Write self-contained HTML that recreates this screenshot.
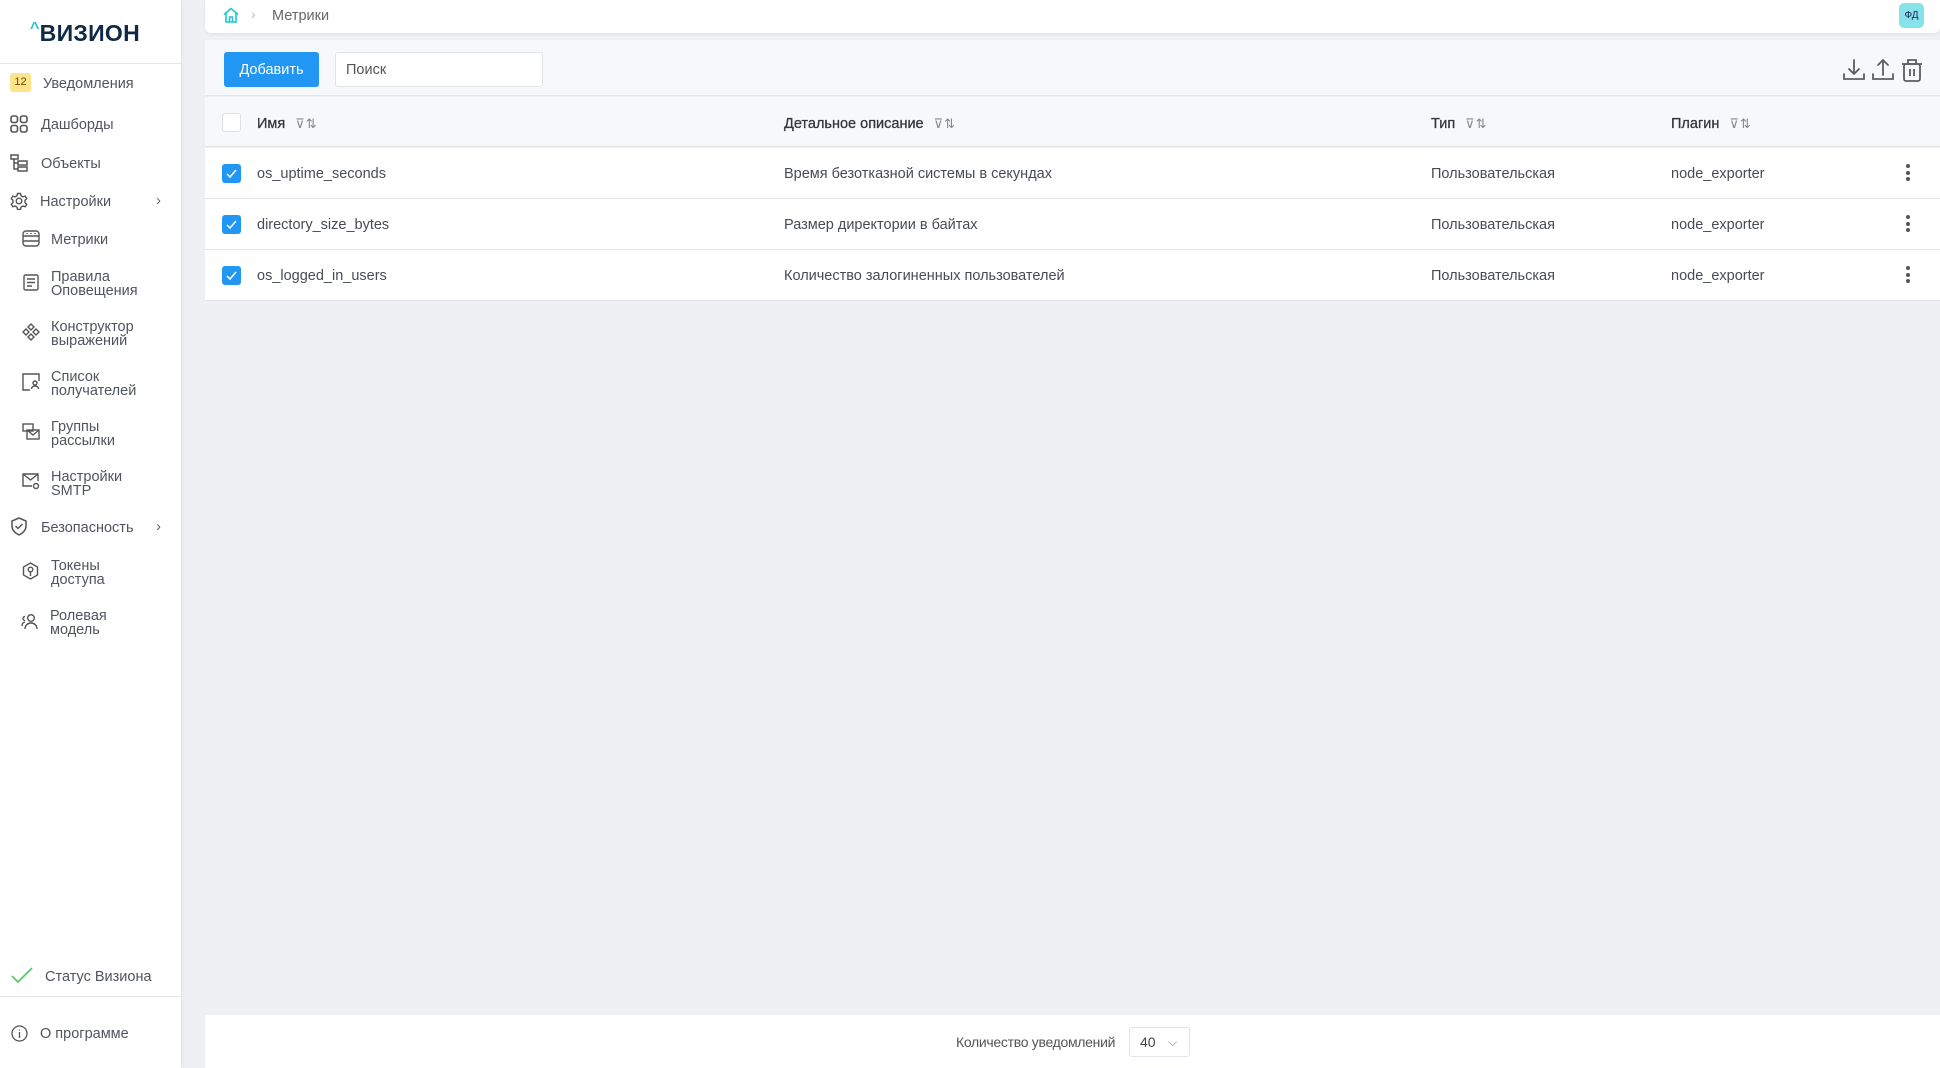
<!DOCTYPE html>
<html><head><meta charset="utf-8"><style>
*{box-sizing:border-box;margin:0;padding:0}
body{width:1940px;height:1068px;background:#eef0f4;font-family:"Liberation Sans",sans-serif;color:#4a4f57;position:relative;overflow:hidden}
.sb{position:absolute;left:0;top:0;width:181px;height:1068px;background:#fff;box-shadow:1px 0 3px rgba(0,0,0,.06)}
.logo{position:absolute;left:30px;top:20px;font-size:23px;font-weight:bold;color:#0f2a45;letter-spacing:.3px}
.logo span{color:#21c4cf;font-size:16px;position:relative;top:-8px}
.sep{position:absolute;left:0;width:181px;height:1px;background:#e3e5e8}
.it{position:absolute;font-size:14.5px;color:#50555d;line-height:14px}
.ic{position:absolute}
.ic svg{display:block}
.arr{position:absolute;left:156px;font-size:15px;color:#666}
.hdr{position:absolute;left:205px;top:0;width:1735px;height:33px;background:#fff;border-radius:0 0 6px 6px;box-shadow:0 1px 3px rgba(0,0,0,.08)}
.tb{position:absolute;left:205px;top:40px;width:1735px;height:56px;background:#f7f8fa;border-bottom:1px solid #e3e5e8}
.btn{position:absolute;left:224px;top:52px;width:95px;height:35px;background:#2196f3;border-radius:3px;color:#fff;font-size:14.5px;line-height:36px;text-align:center}
.srch{position:absolute;left:335px;top:52px;width:208px;height:35px;background:#fff;border:1px solid #e0e3e7;border-radius:3px;font-size:14.5px;line-height:35px;padding-left:10px;color:#555}
.th{position:absolute;left:205px;top:97px;width:1735px;height:50px;background:#f7f8fa;border-bottom:1px solid #e3e5e8}
.row{position:absolute;left:205px;width:1735px;height:51px;background:#fff;border-bottom:1px solid #e3e5e8}
.c{position:absolute;font-size:14.5px;color:#474c54;white-space:nowrap}
.h{color:#33383f;-webkit-text-stroke:.3px #33383f}
.cb{position:absolute;left:222px;width:19px;height:19px;border-radius:3px}
.ck{background:#2196f3}
.un{background:#fff;border:1px solid #dde0e4}
.fi{-webkit-text-stroke:0;color:#888;font-size:13px;margin-left:10px;letter-spacing:1px}
.dots{position:absolute;left:1906px;width:4px}
.dots i{display:block;width:4px;height:4px;border-radius:2px;background:#555;margin-bottom:2.5px}
.ft{position:absolute;left:205px;top:1015px;width:1735px;height:53px;background:#fff}
</style></head><body>
<div class="sb">
<div class="logo"><span>^</span>ВИЗИОН</div>
<div class="sep" style="top:63px"></div>
<div style="position:absolute;left:10px;top:73px;width:21px;height:19px;background:#fde48a;border-radius:3px;font-size:11px;text-align:center;line-height:19px;color:#6a4a00">12</div>
<div class="it" style="left:43px;top:77px">Уведомления</div>
<div class="ic" style="left:10px;top:115px"><svg width="18" height="18" fill="none" stroke="#555" stroke-width="1.6"><rect x="1" y="1" width="6.5" height="6.5" rx="2"/><rect x="10.5" y="1" width="6.5" height="6.5" rx="2"/><rect x="1" y="10.5" width="6.5" height="6.5" rx="2"/><rect x="10.5" y="10.5" width="6.5" height="6.5" rx="2"/></svg></div>
<div class="it" style="left:41px;top:118px">Дашборды</div>
<div class="ic" style="left:10px;top:154px"><svg width="18" height="18" fill="none" stroke="#555" stroke-width="1.5"><rect x="1" y="1" width="7" height="4"/><path d="M4 5v10h4M4 9h4"/><rect x="8" y="7" width="9" height="4"/><rect x="8" y="13" width="9" height="4"/></svg></div>
<div class="it" style="left:41px;top:157px">Объекты</div>
<div class="ic" style="left:10px;top:192px"><svg width="18" height="18" fill="none" stroke="#555" stroke-width="1.4"><circle cx="9" cy="9" r="2.8"/><path d="M7.5 1.5h3l.5 2.3 2 1.1 2.2-.8 1.5 2.6-1.7 1.6v2.3l1.7 1.6-1.5 2.6-2.2-.8-2 1.1-.5 2.3h-3l-.5-2.3-2-1.1-2.2.8L1.3 12.2 3 10.6V8.3L1.3 6.7 2.8 4.1 5 4.9 7 3.8z"/></svg></div>
<div class="it" style="left:40px;top:195px">Настройки</div>
<div class="arr" style="top:192px">›</div>
<div class="ic" style="left:22px;top:230px"><svg width="18" height="17" fill="none" stroke="#555" stroke-width="1.4"><rect x="1" y="1" width="16" height="15" rx="3"/><path d="M1 6h16M1 11h16M5 3v1M9 3v1M13 3v1"/></svg></div>
<div class="it" style="left:51px;top:233px">Метрики</div>
<div class="ic" style="left:23px;top:274px"><svg width="16" height="17" fill="none" stroke="#555" stroke-width="1.4"><rect x="1" y="1" width="14" height="15" rx="1.5"/><path d="M4 5h8M4 8.5h8M4 12h5"/></svg></div>
<div class="it" style="left:51px;top:270px">Правила<br>Оповещения</div>
<div class="ic" style="left:22px;top:323px"><svg width="18" height="18" fill="none" stroke="#555" stroke-width="1.4"><path d="M9 1l3 3-3 3-3-3zM4 6l3 3-3 3-3-3zM14 6l3 3-3 3-3-3zM9 11l3 3-3 3-3-3z"/></svg></div>
<div class="it" style="left:51px;top:320px">Конструктор<br>выражений</div>
<div class="ic" style="left:22px;top:373px"><svg width="18" height="18" fill="none" stroke="#555" stroke-width="1.4"><path d="M8 17H1V1h16v7"/><circle cx="13" cy="10" r="2"/><path d="M9.5 16c0-2 1.5-3 3.5-3s3.5 1 3.5 3"/></svg></div>
<div class="it" style="left:51px;top:370px">Список<br>получателей</div>
<div class="ic" style="left:22px;top:423px"><svg width="18" height="18" fill="none" stroke="#555" stroke-width="1.4"><rect x="1" y="1" width="10" height="7"/><rect x="5" y="7" width="12" height="9"/><path d="M5 7l6 5 6-5"/></svg></div>
<div class="it" style="left:51px;top:420px">Группы<br>рассылки</div>
<div class="ic" style="left:22px;top:472px"><svg width="18" height="18" fill="none" stroke="#555" stroke-width="1.4"><path d="M10 14H1V2h15v7"/><path d="M1 2l7.5 6L16 2"/><circle cx="14" cy="14" r="2.5"/></svg></div>
<div class="it" style="left:51px;top:470px">Настройки<br>SMTP</div>
<div class="ic" style="left:10px;top:517px"><svg width="18" height="19" fill="none" stroke="#555" stroke-width="1.5"><path d="M9 1l7 3v5c0 4-3 7-7 9-4-2-7-5-7-9V4z"/><path d="M5.5 9l2.5 2.5 4.5-4.5"/></svg></div>
<div class="it" style="left:41px;top:521px">Безопасность</div>
<div class="arr" style="top:518px">›</div>
<div class="ic" style="left:22px;top:562px"><svg width="17" height="18" fill="none" stroke="#555" stroke-width="1.4"><path d="M8.5 1l7 4v8l-7 4-7-4V5z"/><circle cx="8.5" cy="7.5" r="2.3"/><path d="M8.5 10v4"/></svg></div>
<div class="it" style="left:51px;top:559px">Токены<br>доступа</div>
<div class="ic" style="left:21px;top:613px"><svg width="18" height="17" fill="none" stroke="#555" stroke-width="1.4"><circle cx="10" cy="5" r="3.3"/><path d="M4 16c0-3.5 2.7-6 6-6s6 2.5 6 6"/><path d="M4 3.5a2 2 0 000 4M1 13c0-2 1-3.5 3-4"/></svg></div>
<div class="it" style="left:50px;top:609px">Ролевая<br>модель</div>
<div class="ic" style="left:11px;top:967px"><svg width="22" height="17" fill="none" stroke="#5cc56e" stroke-width="1.8"><path d="M1 9l6 6L21 1"/></svg></div>
<div class="it" style="left:45px;top:970px">Статус Визиона</div>
<div class="sep" style="top:996px"></div>
<div class="ic" style="left:11px;top:1025px"><svg width="17" height="17" fill="none" stroke="#555" stroke-width="1.3"><circle cx="8.5" cy="8.5" r="7.5"/><path d="M8.5 7v6M8.5 4.5v1"/></svg></div>
<div class="it" style="left:40px;top:1027px">О программе</div>
</div>

<div class="hdr">
<div style="position:absolute;left:18px;top:7px"><svg width="16" height="16" fill="none" stroke="#21c4cf" stroke-width="1.6"><path d="M1 7.5L8 1.5l7 6M3 6v9h10V6M6.5 15v-5h3v5"/></svg></div>
<div style="position:absolute;left:46px;top:6px;color:#bbb;font-size:14px">›</div>
<div style="position:absolute;left:67px;top:8px;font-size:14.5px;color:#666">Метрики</div>
<div style="position:absolute;left:1694px;top:3px;width:25px;height:25px;border-radius:5px;background:#86e3ea;font-size:10px;line-height:25px;text-align:center;color:#225">ФД</div>
</div>

<div class="tb"></div>
<div class="btn">Добавить</div>
<div class="srch">Поиск</div>
<svg style="position:absolute;left:1842px;top:58px" width="24" height="24" fill="none" stroke="#5a5f66" stroke-width="1.8" stroke-linecap="round"><path d="M12 2v14M7 11l5 5 5-5M2 16v5h20v-5"/></svg>
<svg style="position:absolute;left:1871px;top:58px" width="24" height="24" fill="none" stroke="#5a5f66" stroke-width="1.8" stroke-linecap="round"><path d="M12 17V2M7 7l5-5 5 5M2 16v5h20v-5"/></svg>
<svg style="position:absolute;left:1901px;top:58px" width="22" height="24" fill="none" stroke="#5a5f66" stroke-width="1.8"><rect x="3" y="6" width="16" height="17" rx="2"/><path d="M1 6h20M7 6V2h8v4M9 11v7M13 11v7"/></svg>

<div class="th"></div>
<div class="cb un" style="top:113px"></div>
<div class="c h" style="left:257px;top:116px">Имя<span class="fi">⊽⇅</span></div>
<div class="c h" style="left:784px;top:116px">Детальное описание<span class="fi">⊽⇅</span></div>
<div class="c h" style="left:1431px;top:116px">Тип<span class="fi">⊽⇅</span></div>
<div class="c h" style="left:1671px;top:116px">Плагин<span class="fi">⊽⇅</span></div>

<div class="row" style="top:148px"></div>
<div class="row" style="top:199px"></div>
<div class="row" style="top:250px"></div>

<div class="cb ck" style="top:164px"><svg width="19" height="19" fill="none" stroke="#fff" stroke-width="1.5"><path d="M5 10l3 3 6-7"/></svg></div>
<div class="c" style="left:257px;top:166px">os_uptime_seconds</div>
<div class="c" style="left:784px;top:166px">Время безотказной системы в секундах</div>
<div class="c" style="left:1431px;top:166px">Пользовательская</div>
<div class="c" style="left:1671px;top:166px">node_exporter</div>
<div class="dots" style="top:164px"><i></i><i></i><i></i></div>

<div class="cb ck" style="top:215px"><svg width="19" height="19" fill="none" stroke="#fff" stroke-width="1.5"><path d="M5 10l3 3 6-7"/></svg></div>
<div class="c" style="left:257px;top:217px">directory_size_bytes</div>
<div class="c" style="left:784px;top:217px">Размер директории в байтах</div>
<div class="c" style="left:1431px;top:217px">Пользовательская</div>
<div class="c" style="left:1671px;top:217px">node_exporter</div>
<div class="dots" style="top:215px"><i></i><i></i><i></i></div>

<div class="cb ck" style="top:266px"><svg width="19" height="19" fill="none" stroke="#fff" stroke-width="1.5"><path d="M5 10l3 3 6-7"/></svg></div>
<div class="c" style="left:257px;top:268px">os_logged_in_users</div>
<div class="c" style="left:784px;top:268px">Количество залогиненных пользователей</div>
<div class="c" style="left:1431px;top:268px">Пользовательская</div>
<div class="c" style="left:1671px;top:268px">node_exporter</div>
<div class="dots" style="top:266px"><i></i><i></i><i></i></div>

<div class="ft">
<div style="position:absolute;left:751px;top:19px;font-size:14px;color:#555;letter-spacing:-.3px">Количество уведомлений</div>
<div style="position:absolute;left:924px;top:12px;width:61px;height:30px;border:1px solid #e0e3e7;border-radius:3px;font-size:14px;line-height:29px;padding-left:10px;color:#444">40<span style="position:absolute;left:38px;top:0;color:#888;font-size:12px">⌵</span></div>
</div>
</body></html>
